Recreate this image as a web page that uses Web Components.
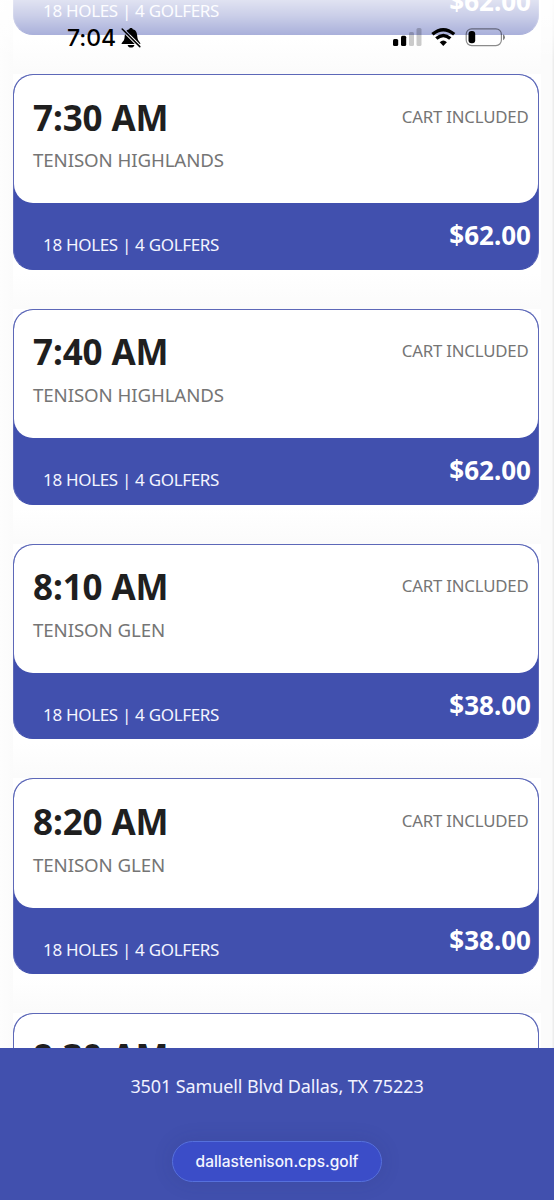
<!DOCTYPE html>
<html lang="en">
<head>
<meta charset="utf-8">
<title>Tee times</title>
<style>
html,body{margin:0;height:100%;overflow:hidden}
body{font-family:"Noto Sans",sans-serif}
</style>
</head>
<body>
<tee-page>
  <status-bar slot="status">7:04</status-bar>
  <tee-card price="$62.00"></tee-card>
  <tee-card price="$62.00"><span slot="time">7:30 AM</span><span slot="course">TENISON HIGHLANDS</span></tee-card>
  <tee-card price="$62.00"><span slot="time">7:40 AM</span><span slot="course">TENISON HIGHLANDS</span></tee-card>
  <tee-card price="$38.00"><span slot="time">8:10 AM</span><span slot="course">TENISON GLEN</span></tee-card>
  <tee-card price="$38.00"><span slot="time">8:20 AM</span><span slot="course">TENISON GLEN</span></tee-card>
  <tee-card price=""><span slot="time">8:30 AM</span></tee-card>
  <site-footer slot="footer"><span>3501 Samuell Blvd Dallas, TX 75223</span><url-pill slot="url">dallastenison.cps.golf</url-pill></site-footer>
</tee-page>
<script>
const define = (name, html, setup) => customElements.define(name, class extends HTMLElement {
  constructor() {
    super();
    this.attachShadow({ mode: 'open' }).innerHTML = html;
  }
  connectedCallback() { if (setup) setup(this); }
});

define('tee-page', `
<style>
:host{display:flex;flex-direction:column;position:relative;height:1200px;box-sizing:border-box;background:linear-gradient(90deg,#fdfdfd,#fbfbfb 13px,#fbfbfb 541px,#fbfbfb 552px,#ededed 553px);overflow:hidden}
main{flex:1;min-height:0;overflow:hidden;padding:0 13px}
.list{display:flex;flex-direction:column;margin-top:-160.75px;width:528px;background:#fff}
</style>
<slot name="status"></slot>
<main><div class="list"><slot></slot></div></main>
<slot name="footer"></slot>`);

define('tee-card', `
<style>
:host{display:block;flex:none;height:234.75px;background:linear-gradient(#fff 85%,#fbfbfb 99%)}
.card{display:flex;flex-direction:column;box-sizing:border-box;width:525.5px;height:195.75px;border:1px solid #5d68b8;border-bottom-color:#4150ae;border-radius:20px;background:#4150ae;overflow:hidden}
.top{display:flex;justify-content:space-between;align-items:flex-start;box-sizing:border-box;height:128.3px;background:#fff;border-radius:19px;padding:17.5px 9px 0 19px}
.left{display:flex;flex-direction:column;white-space:nowrap}
.time{font-weight:700;font-size:35px;line-height:50px;letter-spacing:-.1px;color:#1f1f1f}
.course{font-size:18.7px;line-height:26px;letter-spacing:-.1px;margin-top:4.8px;color:#757575}
.cart{margin-left:auto;font-size:16.8px;line-height:24px;letter-spacing:-.2px;margin-top:12px;color:#757575}
.bottom{display:flex;flex:1;justify-content:space-between;align-items:flex-start;color:#fff;padding:0 6.5px 0 29px;white-space:nowrap}
.holes{font-size:17px;line-height:24px;letter-spacing:-.32px;margin-top:30.2px;color:#f4f5ff}
.price{font-weight:700;font-size:26px;line-height:36px;margin-top:14.2px}
</style>
<div class="card">
<div class="top"><div class="left"><span class="time"><slot name="time"></slot></span><span class="course"><slot name="course"></slot></span></div><span class="cart">CART INCLUDED</span></div>
<div class="bottom"><span class="holes">18 HOLES | 4 GOLFERS</span><span class="price"></span></div>
</div>`, el => { el.shadowRoot.querySelector('.price').textContent = el.getAttribute('price'); });

define('status-bar', `
<style>
:host{position:absolute;z-index:2;top:0;left:0;right:0;height:60px;display:flex;justify-content:space-between;box-sizing:border-box;padding:27px 48px 0 67px;background:linear-gradient(rgba(255,255,255,.84),rgba(255,255,255,.72) 16px,rgba(255,255,255,.55) 35px,rgba(255,255,255,0));color:#000}
.clock,.icons{display:flex;align-items:flex-start}
.t{font:500 23px/22px Inter,sans-serif;letter-spacing:-.1px;width:50px;white-space:nowrap}
svg{display:block;flex:none}
.bell{margin:1px 0 0 4px}
</style>
<div class="clock"><span class="t"><slot></slot></span>
<svg class="bell" width="20" height="20" viewBox="0 0 20 20"><defs><mask id="m" maskUnits="userSpaceOnUse" x="0" y="0" width="20" height="20"><rect width="20" height="20" fill="#fff"/><path d="M0-.2 20 19.8" stroke="#000" stroke-width="3.5"/></mask></defs><path mask="url(#m)" d="M.6 15.900c0-1.700 2.500-2.400 2.900-5.900C3.900 5.600 4.400 2 8.200 1.200C8.600-.3 11.400-.3 11.800 1.200C15.600 2 16.100 5.600 16.500 10C16.900 13.300 19.400 14 19.400 15.900Z M6.600 17h6.800c-.4 3.400-6.400 3.400-6.800 0Z" fill="#000"/><path d="M1.200 1 18.800 18.600" stroke="#000" stroke-width="1.500" stroke-linecap="round"/></svg></div>
<div class="icons">
<svg width="113" height="21" viewBox="393 27 113 21"><g><rect x="393" y="39" width="5.200" height="7" rx="1.500"/><rect x="401" y="35.800" width="5.200" height="10.200" rx="1.500"/><g fill="#000" opacity=".2"><rect x="409" y="32" width="5" height="14" rx="1.500"/><rect x="416.500" y="28" width="5" height="18" rx="1.500"/></g></g>
<g fill="none" stroke="#000" stroke-width="3.400"><path d="M432.400 34.300Q443.300 25 454.200 34.300"/><path d="M436.300 38.500Q443.300 32.300 450.300 38.500"/></g><path d="M443.300 46 439.700 42.200Q443.300 39 446.900 42.200Z"/>
<rect x="466.200" y="28.800" width="35.200" height="16.800" rx="5.500" fill="none" stroke="#000" stroke-opacity=".45" stroke-width="1.200"/><rect x="468.500" y="31" width="6.700" height="12.300" rx="3"/><path d="M503 34.300q2 .8 2 3t-2 3z" fill-opacity=".5"/></svg></div>`);

define('site-footer', `
<style>
:host{display:flex;flex:none;flex-direction:column;align-items:center;height:152px;background:#4150ae;position:relative;z-index:1}
.addr{font-size:18px;line-height:26px;letter-spacing:-.1px;margin-top:25px;color:#f1f2ff;white-space:nowrap}
</style>
<div class="addr"><slot></slot></div><slot name="url"></slot>`);

define('url-pill', `
<style>
:host{display:flex;align-items:center;justify-content:center;box-sizing:border-box;width:210.5px;height:41px;margin-top:42px;border:1px solid #5670dc;border-radius:21px;background:#3b4dc8;box-shadow:0 0 20px rgba(40,50,100,.15);color:#f4f5ff;font:500 15.5px/20px Inter,sans-serif;white-space:nowrap}
</style><span><slot></slot></span>`);
</script>
</body>
</html>
